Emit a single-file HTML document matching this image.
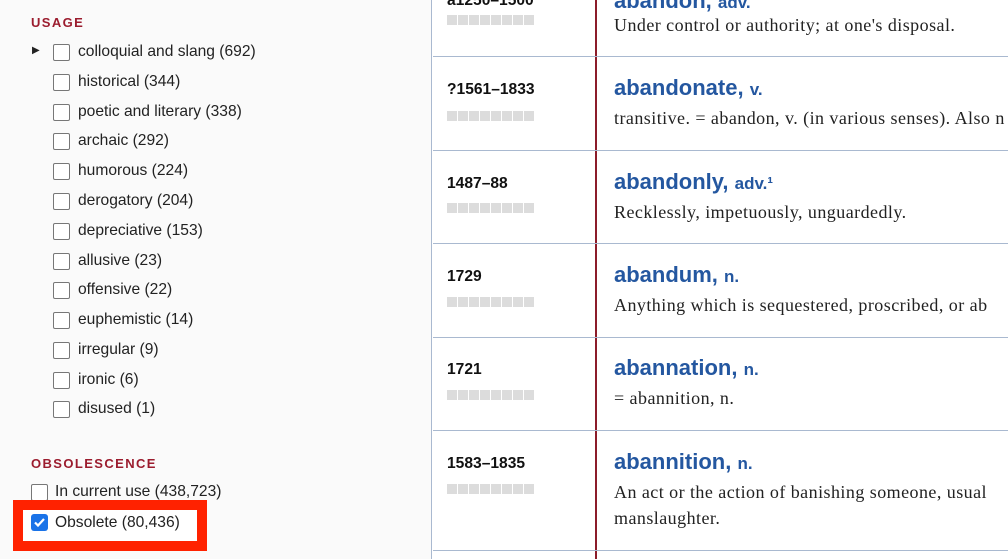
<!DOCTYPE html>
<html><head><style>
*{margin:0;padding:0;box-sizing:border-box}
body{width:1008px;height:559px;overflow:hidden;position:relative;background:#fff;font-family:"Liberation Sans",sans-serif}
.left{position:absolute;left:0;top:0;width:432px;height:559px;background:#fafafa;border-right:1px solid #a9b9d0}
.h{position:absolute;left:31px;font-weight:bold;font-size:13px;letter-spacing:1.4px;color:#9b1c2e}
.it{position:absolute;font-size:15.6px;color:#222;height:20px;line-height:20px}
.cb{position:absolute;width:17px;height:17px;border:1.5px solid #777;border-radius:2px;background:#fff}
.tri{position:absolute;left:32px;font-size:10px;color:#222}
.red{position:absolute;left:13px;top:500px;width:194px;height:51px;border:10px solid #ff2200;background:#fff}
.chk{position:absolute;width:17px;height:17px;background:#1a73e8;border-radius:3px}
.vline{position:absolute;left:595px;top:0;width:2px;height:559px;background:#8c1c2a}
.hr{position:absolute;left:433px;width:575px;height:1px;background:#a9b9d0}
.date{position:absolute;left:447px;font-weight:bold;font-size:15.6px;color:#111}
.bar{position:absolute;left:447px;width:88px;height:10px;background:repeating-linear-gradient(90deg,#dcdcdc 0 10px,#fff 10px 11px)}
.hw{position:absolute;left:614px;font-size:22px;font-weight:bold;color:#2457a0;white-space:nowrap}
.hw span{font-size:17px}
.def{position:absolute;left:614px;font-family:"Liberation Serif",serif;font-size:18px;letter-spacing:0.45px;color:#222;white-space:nowrap}
</style></head><body>
<div class="left">
<div class="h" style="top:15px">USAGE</div>
<div class="tri" style="top:45px">▶</div>
<div class="cb" style="left:53px;top:44px"></div><div class="it" style="left:78px;top:42px">colloquial and slang (692)</div>
<div class="cb" style="left:53px;top:74px"></div><div class="it" style="left:78px;top:72px">historical (344)</div>
<div class="cb" style="left:53px;top:104px"></div><div class="it" style="left:78px;top:102px">poetic and literary (338)</div>
<div class="cb" style="left:53px;top:133px"></div><div class="it" style="left:78px;top:131px">archaic (292)</div>
<div class="cb" style="left:53px;top:163px"></div><div class="it" style="left:78px;top:161px">humorous (224)</div>
<div class="cb" style="left:53px;top:193px"></div><div class="it" style="left:78px;top:191px">derogatory (204)</div>
<div class="cb" style="left:53px;top:223px"></div><div class="it" style="left:78px;top:221px">depreciative (153)</div>
<div class="cb" style="left:53px;top:253px"></div><div class="it" style="left:78px;top:251px">allusive (23)</div>
<div class="cb" style="left:53px;top:282px"></div><div class="it" style="left:78px;top:280px">offensive (22)</div>
<div class="cb" style="left:53px;top:312px"></div><div class="it" style="left:78px;top:310px">euphemistic (14)</div>
<div class="cb" style="left:53px;top:342px"></div><div class="it" style="left:78px;top:340px">irregular (9)</div>
<div class="cb" style="left:53px;top:372px"></div><div class="it" style="left:78px;top:370px">ironic (6)</div>
<div class="cb" style="left:53px;top:401px"></div><div class="it" style="left:78px;top:399px">disused (1)</div>
<div class="h" style="top:456px">OBSOLESCENCE</div>
<div class="cb" style="left:31px;top:484px"></div><div class="it" style="left:55px;top:482px">In current use (438,723)</div>
<div class="red"></div>
<div class="chk" style="left:31px;top:514px"><svg width="17" height="17" viewBox="0 0 17 17"><path d="M4 8.5l3 3 6-6.5" stroke="#fff" stroke-width="2.2" fill="none"/></svg></div>
<div class="it" style="left:55px;top:513px">Obsolete (80,436)</div>
</div>
<div class="vline"></div>
<div class="hr" style="top:56px"></div>
<div class="hr" style="top:150px"></div>
<div class="hr" style="top:243px"></div>
<div class="hr" style="top:337px"></div>
<div class="hr" style="top:430px"></div>
<div class="hr" style="top:550px"></div>

<div class="date" style="top:-8px">a1250–1500</div><div class="bar" style="top:15px"></div>
<div class="hw" style="top:-12px">abandon, <span>adv.</span></div>
<div class="def" style="top:15px">Under control or authority; at one's disposal.</div>

<div class="date" style="top:81px">?1561–1833</div><div class="bar" style="top:111px"></div>
<div class="hw" style="top:75px">abandonate, <span>v.</span></div>
<div class="def" style="top:108px">transitive. = abandon, v. (in various senses). Also n</div>

<div class="date" style="top:175px">1487–88</div><div class="bar" style="top:203px"></div>
<div class="hw" style="top:169px">abandonly, <span>adv.¹</span></div>
<div class="def" style="top:202px">Recklessly, impetuously, unguardedly.</div>

<div class="date" style="top:268px">1729</div><div class="bar" style="top:297px"></div>
<div class="hw" style="top:262px">abandum, <span>n.</span></div>
<div class="def" style="top:295px">Anything which is sequestered, proscribed, or ab</div>

<div class="date" style="top:361px">1721</div><div class="bar" style="top:390px"></div>
<div class="hw" style="top:355px">abannation, <span>n.</span></div>
<div class="def" style="top:388px">= abannition, n.</div>

<div class="date" style="top:455px">1583–1835</div><div class="bar" style="top:484px"></div>
<div class="hw" style="top:449px">abannition, <span>n.</span></div>
<div class="def" style="top:482px">An act or the action of banishing someone, usual</div>
<div class="def" style="top:508px">manslaughter.</div>
</body></html>
